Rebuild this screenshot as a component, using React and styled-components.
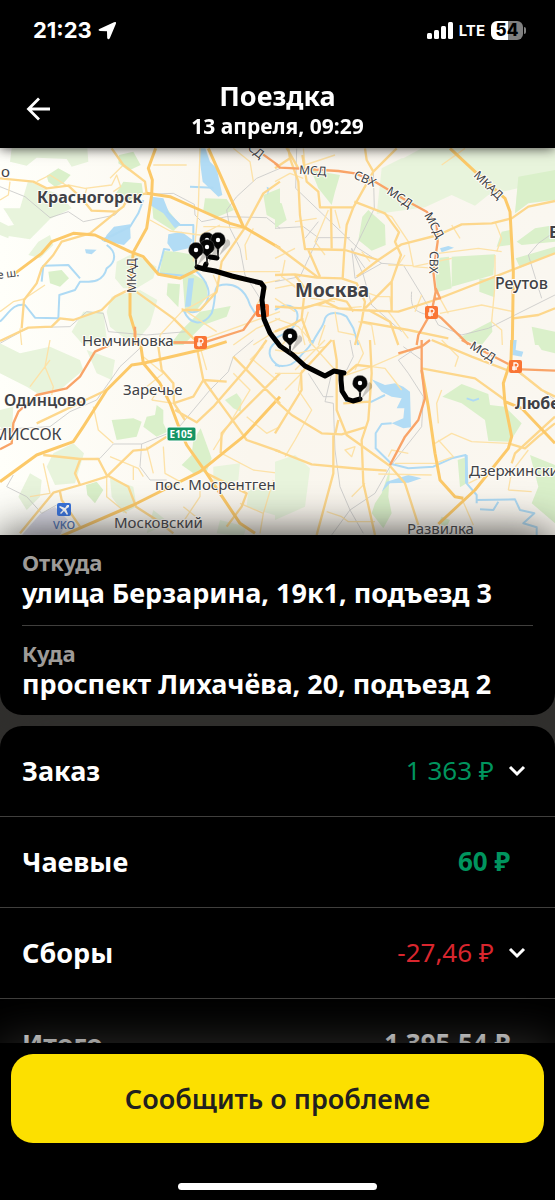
import { useState } from "react";
import styled, { createGlobalStyle } from "styled-components";

const black = "#000000";
const white = "#ffffff";
const panel = "#302f2d";
const muted = "#9e9b98";
const divider = "#403f3d";
const green = "#00945e";
const red = "#d9262e";
const yellow = "#fce000";
const ink = "#21201f";

const GlobalStyle = createGlobalStyle`
    * {
        box-sizing: border-box;
    }
    body {
        margin: 0;
        background-color: ${black};
        font-family: "Noto Sans", "Open Sans", sans-serif;
        color: ${white};
    }
`

const Screen = styled.div`
    height: 100vh;
    display: flex;
    flex-direction: column;
    background-color: ${black};
    overflow: hidden;
`

const StatusBar = styled.div`
    position: relative;
    z-index: 3;
    display: flex;
    align-items: center;
    justify-content: space-between;
    flex-shrink: 0;
    height: 60px;
    padding: 0 29px 0 33px;
    background-color: ${black};
    font-family: Inter, sans-serif;
`
const StatusGroup = styled.div`
    display: flex;
    align-items: center;
    gap: 6px;
`
const Clock = styled.span`
    font-size: 22px;
    font-weight: 700;
`
const Network = styled.span`
    font-size: 15px;
    font-weight: 700;
`
const Battery = styled.div`
    display: flex;
    align-items: center;
    gap: 1px;
`
const BatteryBody = styled.span`
    width: 32px;
    height: 19px;
    border-radius: 6px;
    background: linear-gradient(90deg, ${white} 54%, #808080 54%);
    color: ${black};
    font-size: 17px;
    line-height: 19px;
    font-weight: 800;
    text-align: center;
`
const BatteryCap = styled.span`
    width: 2px;
    height: 7px;
    border-radius: 0 2px 2px 0;
    background-color: #808080;
`

const Header = styled.header`
    display: grid;
    grid-template-columns: 54px 1fr 54px;
    align-items: center;
    flex-shrink: 0;
    height: 88px;
    padding: 11px 0 0;
    position: relative;
    z-index: 2;
    background-color: ${black};
    box-shadow: 0 0 12px ${panel};
`
const BackButton = styled.button`
    display: flex;
    justify-content: flex-end;
    padding: 0 4px 2px 0;
    border: none;
    background: none;
    color: ${white};
    cursor: pointer;
`
const Heading = styled.div`
    text-align: center;
`
const Title = styled.h1`
    margin: 0;
    font-size: 27px;
    line-height: 32px;
    font-weight: 700;
`
const Subtitle = styled.p`
    margin: 0;
    font-size: 21px;
    line-height: 28px;
    font-weight: 700;
`

const Content = styled.main`
    flex: 1;
    min-height: 0;
    overflow-y: auto;
    scrollbar-width: none;
    background-color: ${panel};
`
const MapSvg = styled.svg`
    display: block;
    width: 100%;
    height: auto;
    font-family: "Noto Sans", sans-serif;
`

const Addresses = styled.section`
    position: relative;
    padding: 13px 22px 15px;
    margin-bottom: 11px;
    border-radius: 0 0 22px 22px;
    background-color: ${black};
    box-shadow: 0 0 45px ${panel};
`
const Address = styled.div`
    padding-bottom: 16px;

    & + & {
        padding-top: 13px;
        padding-bottom: 0;
        border-top: 1px solid ${divider};
    }
`
const AddressLabel = styled.div`
    padding-bottom: 1px;
    font-size: 22px;
    line-height: 28px;
    font-weight: 700;
    color: ${muted};
`
const AddressText = styled.div`
    font-size: 27px;
    line-height: 32px;
    font-weight: 700;
`

const Summary = styled.section`
    position: relative;
    border-radius: 22px 22px 0 0;
    background-color: ${black};
`
const Row = styled.div`
    display: flex;
    align-items: center;
    justify-content: space-between;
    height: 91px;
    padding: 0 ${props => props.$plain ? "45px" : "22px"} 2px 22px;
    border-bottom: 1px solid ${divider};
    font-size: 27px;
    font-weight: 700;
`
const Toggle = styled.button`
    display: flex;
    align-items: center;
    gap: 7px;
    padding: 0;
    border: none;
    background: none;
    color: ${white};
    font: inherit;
    cursor: pointer;
`
const Amount = styled.span`
    color: ${props => props.$color};
    font-size: 26px;
    font-weight: ${props => props.$light ? 400 : 700};
`

const Footer = styled.footer`
    position: relative;
    z-index: 2;
    display: flex;
    flex-direction: column;
    align-items: center;
    flex-shrink: 0;
    padding: 11px 11px 10px;
    gap: 40px;
    background-color: ${black};
    box-shadow: 0 0 45px ${panel};
`
const ReportButton = styled.button`
    width: 100%;
    height: 89px;
    border: none;
    border-radius: 22px;
    background-color: ${yellow};
    color: ${ink};
    font-family: inherit;
    font-size: 27px;
    font-weight: 600;
    cursor: pointer;
`
const HomeIndicator = styled.div`
    width: 36vw;
    height: 7px;
    border-radius: 4px;
    background-color: ${white};
`

// every tile is drawn at 3x, [x, y] is its corner on the map
const tiles = [
    {
        x: 0, y: -3,
        pale: [
            "M10 190L60 190L85 105L130 130L180 150L215 190L150 222L90 283L20 272L10 245L42 240L20 205Z",
            "M35 10L262 10L265 50L215 65L200 42L110 38L80 62L30 50Z",
            "M115 290L150 270L160 300L120 340L85 330ZM250 500L310 500L320 580L250 600L215 560Z",
            "M400 325L470 365L460 400L410 430L370 430L345 400L350 350Z",
            "M335 455L420 435L472 465L450 540L400 600L330 545L320 500Z",
            "M0 230L30 245L25 280L0 270Z",
        ],
        green: [
            "M140 92L175 70L212 90L190 115L165 125L145 110Z",
            "M357 30L400 20L422 60L385 77L355 55Z",
            "M370 110L425 115L430 150L375 170L345 150Z",
            "M615 160L680 162L702 195L650 217L610 195Z",
            "M790 150L840 130L840 232L800 210Z",
            "M492 318L530 320L583 330L585 370L545 395L478 383Z",
            "M575 385L620 410L622 455L590 495L555 495L548 400Z",
            "M455 165L500 190L540 240L520 258L460 220Z",
            "M503 415L540 418L535 487L500 450Z",
            "M600 500L692 483L680 515L610 540L550 600L510 600L540 560Z",
            "M145 380L185 375L207 400L180 425L150 415Z",
        ],
        lake: [
            "M598 10L616 10L630 50L650 70L667 150L655 155L608 110L600 50Z",
            "M505 268L545 260L578 285L565 310L520 320L502 295Z",
            "M342 245L390 238L392 280L372 300L345 295L310 290L320 270Z",
            "M255 313L290 314L275 328L258 325Z",
            "M565 400L582 400L572 485L555 485Z",
            "M455 155L490 160L510 210L540 240L525 250L490 205L450 180Z",
            "M800 125L810 130L803 150Z",
        ],
        river: [
            "M430 165L415 205L390 245L340 270L305 285",
            "M500 200L540 240L580 240L580 320M570 125L640 128",
            "M510 315L492 312L485 340L472 385L555 392L588 372",
            "M585 375C625 410 640 450 610 485C590 510 565 500 552 498C570 540 610 545 635 505C650 460 640 430 655 422C700 410 735 430 750 480L765 505",
            "M320 300C350 320 350 350 320 370C310 410 280 412 240 410L225 435L178 450L175 520L105 518L75 480C40 475 30 500 0 530",
            "M240 400L205 360L130 362L125 410",
        ],
        rail: [
            "M0 125L75 155L150 218L205 200L250 230L345 210L400 150L520 145L583 178L585 210L605 230L680 215L800 218L840 250",
            "M840 70L770 100L710 155L680 195L690 250L720 310L735 390L780 460",
            "M0 595L85 548L210 545L260 500L310 505L325 560L440 570L560 560",
        ],
        minor: [
            "M0 500L40 470L72 462L135 420M30 110L25 150L0 165M110 110L150 90L200 122M205 120L255 130L335 120L350 90L362 125L340 140",
            "M600 10L595 190L580 350M700 10L750 50L760 110M450 225L510 258L600 270L660 240M610 245L660 245L735 250M760 250L735 300L740 345",
            "M640 380L840 380M655 425L640 390M545 490L650 560M480 570L545 500L600 470L650 440M480 600L480 570",
            "M690 400L790 415L840 405M700 600L770 550L840 520M590 590L840 500M760 600L840 550M800 430L770 480",
            "M370 60L330 100M460 60L560 60M60 550L65 600M255 150L260 130",
        ],
        road: [
            "M335 10L370 60L435 110L440 145M0 100L100 110L140 130L205 122L245 160L275 197L350 200L370 185L385 155L440 145",
            "M350 200L270 265L185 290L160 330L125 370L110 415L72 465L65 550M0 588L85 548L155 545L180 520L220 525L305 495L345 455L395 430L520 520L590 590",
            "M840 110L790 145L735 248L665 350L650 440L600 495L545 495",
        ],
        major: [
            "M467 10L445 70L457 105L455 150L440 250L400 322L395 370L390 430L390 510L405 560L405 600",
            "M45 385L125 325L155 290L220 265L285 270L390 320L430 335L475 388L540 400L600 370",
            "M625 10L730 245M440 145L510 155L600 195L690 235L735 248L840 310",
        ],
        toll: ["M785 25L840 65", "M515 592L585 592M620 590L730 555L770 500", "M405 545L405 600"],
    },
    {
        x: 275, y: -3,
        pale: [
            "M385 40L440 10L840 10L840 145L760 175L720 205L728 130L640 150L600 182L530 150L450 187L305 207L320 70L380 40Z",
        ],
        green: [
            "M730 95L840 75L840 165L760 175L720 205Z",
            "M280 195L330 240L332 300L290 317L250 285L262 215Z",
            "M108 75L195 90L180 140L170 180L130 130Z",
            "M480 340L522 335L530 430L485 442ZM530 335L660 328L655 390L530 425Z",
            "M613 402L660 398L658 457L613 440ZM680 260L705 255L705 300L665 305Z",
            "M725 290L780 250L840 240L840 290L740 300ZM722 340L840 305L840 325L735 368Z",
            "M550 580L650 528L652 560L620 600Z",
            "M0 170L20 175L35 225L0 250ZM770 545L840 560L840 600L780 600Z",
        ],
        lake: ["M495 310L520 303L537 308L520 315L500 322Z"],
        river: [
            "M0 495C25 478 50 475 65 500C75 525 55 550 40 560L0 580",
            "M110 600C125 560 145 550 150 520C160 500 190 500 215 515L235 550L250 600",
            "M715 590L720 600",
        ],
        rail: [
            "M65 10L62 130L250 310L320 355L385 360L440 450L490 540L560 570L640 550L840 450M295 80L298 190L235 320L270 370",
            "M0 250L85 245L130 278L225 278M130 278L75 395L0 410M320 355L240 400L230 310L265 390L290 480L380 560",
            "M410 440C405 490 420 500 460 510M840 260L790 295L760 330L800 460M90 280L130 230",
        ],
        minor: [
            "M0 110L45 85L85 100M85 10L90 60L180 30M60 230L125 220M0 430L50 420L110 460L180 470M0 520L70 545L110 590",
            "M325 205L350 215L400 290L415 365L530 340M340 360L415 362M415 365L480 370M440 450L420 500M340 500L400 580",
            "M490 325L610 310L680 320M660 330L660 420L650 530L680 555L682 600M495 505L620 480L715 500M520 505L495 460",
            "M660 230L680 280L665 320M530 240L555 280M160 195L120 290L150 330M180 195L195 250M0 340L60 310M30 345L20 395L70 430",
            "M240 430L310 455L345 455L350 500M60 490L120 480L200 490L260 485M100 500L80 560L90 600M180 500L190 560L240 570M250 530L290 540L300 600M0 460L60 500M150 540L130 600",
            "M285 350L260 320M370 360L390 330M570 10L500 60M20 600L60 560",
        ],
        road: [
            "M45 40L70 110L75 210L90 312L210 315L310 345L380 298L490 270L560 238L650 235L710 220L760 185L840 168",
            "M82 30L95 110L130 140L135 187L235 187L295 80L275 45L270 10M295 80L365 10M235 187L215 240L208 315L203 400",
            "M238 170L330 205L372 262L360 290L378 330L350 410L300 460L270 490M0 300L60 345L130 398M168 190L170 310M100 315L135 395",
            "M0 70L45 40L40 10M30 0L70 70M0 390L60 388L125 398L200 400L245 415L270 470L260 530L240 600M310 345L245 395",
            "M60 390L90 430L80 520L110 600M0 485L85 490L150 470L190 490L240 495L370 500L480 465L840 325",
            "M350 410L350 500M260 530L400 555L520 580M280 495L345 530L370 600M0 560L50 540L85 520M130 480L175 460L215 470L235 500",
            "M715 520L790 510L840 490",
        ],
        major: ["M525 10L600 80L690 160L705 200L715 380L712 600"],
        toll: [
            "M0 55L15 68L60 70L190 78L240 85L300 110L400 170L455 200L485 240L488 290L475 380L482 440L470 500L430 570L425 600",
            "M470 500L500 520L580 598M482 430L495 460L475 462",
        ],
    },
    {
        x: 0, y: 192,
        pale: [
            "M0 10L60 40L150 20L240 60L250 90L180 150L120 165L80 140L0 100Z",
            "M90 400L125 420L120 470L80 510L55 470Z",
            "M160 340L220 310L252 340L225 430L165 435L140 380Z",
            "M330 415L400 440L410 500L370 520L335 470Z",
            "M0 210L40 200L35 290L0 260ZM640 380L720 370L715 420L640 440Z",
            "M745 450L840 420L840 530L790 515L740 500ZM660 540L740 560L730 590L650 580ZM460 510L510 550L440 580Z",
            "M260 30L345 60L335 120L290 100Z",
        ],
        green: [
            "M335 240L400 235L425 245L410 290L350 300Z",
            "M440 230L465 225L470 195L490 210L490 250L502 275L470 290L430 260Z",
            "M602 265L635 355L620 395L580 400L545 375L575 345L580 300Z",
            "M258 435L290 425L310 450L285 490L262 465Z",
            "M675 180L710 160L725 180L722 215L700 205Z",
        ],
        lake: [],
        river: ["M830 5C800 25 800 55 840 80"],
        rail: [
            "M760 0L700 50L685 95L630 150L580 210L530 270L425 312L340 312L300 355L240 357L130 345",
            "M425 312L420 380L450 420L500 420M425 20L360 80L290 180L210 215L150 260L0 268M40 405L20 440L80 470L125 520L170 495",
        ],
        minor: [
            "M150 0L135 80L160 140L155 165M90 140L150 60M280 200L295 270L340 310M330 350L415 385L430 410M490 320L495 400L540 425",
            "M130 370L150 460L90 470M320 410L320 470L380 520M440 320L460 400M600 420L600 470L540 560M720 490L790 520L780 580",
            "M430 50L490 100L440 140M455 180L520 190M480 140L455 180M700 100L750 150L640 330M740 230L800 280L840 260M665 340L760 390L840 400",
            "M760 60L830 120M790 20L750 60M620 90L600 20M400 420L400 380M550 500L600 540M820 420L790 520",
        ],
        road: [
            "M60 580L105 525L160 458L240 435L320 410L400 332L440 328L500 290M130 345L240 357L295 357L320 405L385 440L408 500L470 540L520 580",
            "M592 30L610 120L690 230L740 300L840 335M525 210L590 247L640 200L740 85L800 0M520 190L580 170L610 120L680 125",
            "M475 20L485 90L520 130L522 190L555 240M240 360L225 400L240 435M662 340L665 280L700 240L840 100M700 50L840 190",
            "M180 455L185 480L240 560M620 400L740 460L725 500L680 560M110 250L320 150",
        ],
        major: [
            "M0 425L110 345L220 305L250 260L320 150L395 75L430 70L600 30L680 5",
            "M420 0L430 70L480 130L510 190L540 270L560 315L620 400L720 550L765 580",
            "M180 590L400 495L600 395L730 290L840 170",
        ],
        toll: ["M330 15L285 35L240 110L200 145L110 165L55 215L40 250L35 310L0 328", "M515 8L585 8"],
    },
    {
        x: 275, y: 192,
        pale: ["M0 365L60 345L105 385L90 500L0 540Z"],
        green: [
            "M502 170L560 132L640 162L645 195L690 200L740 250L705 305L640 303L630 240L560 190Z",
            "M765 345L840 375L840 550L770 490L790 440Z",
            "M345 385L340 470L350 520L325 565L290 520L300 490L320 460Z",
            "M548 360L578 350L575 430L555 442Z",
            "M780 0L840 0L840 40L800 30ZM500 530L525 540L515 560L490 550Z",
        ],
        lake: [
            "M290 118L330 135L360 130L385 140L405 155L408 262L385 265L350 250L385 235L388 205L365 205L380 175L350 170L320 155Z",
            "M715 0L725 0L722 30L745 35L740 50L712 45Z",
            "M320 455L335 425L400 405L440 415L400 428L345 430Z",
            "M570 345L578 345L580 430L570 430Z",
        ],
        river: [
            "M210 185L290 185L330 165M350 250L320 252L302 280L302 325L350 372L400 385L475 380L530 355L572 345L575 430L605 465L605 490M605 480L720 478L735 510L778 520L745 550L785 562L785 585M615 508L655 510L670 485M575 175L595 182L612 176",
            "M0 75C40 85 60 70 75 50C90 30 110 20 112 0",
        ],
        rail: [
            "M225 0L235 50L215 90L170 100L150 185L175 190L180 330L195 440L225 510L170 585M225 510L300 460L345 380L440 260L445 170L400 100L370 60L430 20",
            "M100 100L145 170L175 170M225 510L265 580M720 90L840 180M385 20L440 60",
        ],
        minor: [
            "M0 100L80 100L30 150M80 90L70 150L110 210L60 300L30 350M250 0L265 40L240 90M290 80L330 85L380 150",
            "M360 370L480 370L535 350L490 300M480 310L530 280L590 305L700 310M490 250L485 190L500 150M340 350L350 330L400 340M470 405L310 402",
            "M155 515L200 530L220 545L300 545M210 330L240 320L230 350ZM150 0L60 90M0 30L70 40L150 20M100 0L180 90M200 110L290 80L440 15M500 0L550 50L540 80",
            "M700 450L710 395L760 330M700 450L770 455M270 430L230 470M560 475L595 555M580 430L640 400",
        ],
        road: [
            "M0 280L80 150L78 100L170 0M0 330L110 373L260 387L335 392M175 0L185 60L185 210L215 285L345 378L390 430L430 555",
            "M0 180L50 225L140 280L200 283L270 262M175 280L175 400L125 585M285 0L290 100L280 240L260 300L265 430L300 585M205 190L285 185",
            "M440 85L600 115L690 180M700 310L750 325L790 290L840 250M710 370L720 340L840 230M190 240L180 285M470 0L590 50L700 92",
            "M725 90L800 150L840 170M215 100L245 75L290 80",
        ],
        major: [
            "M440 90L460 200L480 340L495 420L540 470L565 475",
            "M710 0L708 60L685 130L690 190L710 290L700 325L600 450L490 552M690 185L740 205L840 310",
        ],
        toll: ["M465 0L440 20L370 40M440 0L440 90L450 175L430 240L390 290L345 375", "M560 0L700 72M740 88L840 92"],
    },
];

const labels = [
    { text: "о", x: 1, y: 29, size: 15 },
    { text: "Красногорск", x: 37, y: 55, size: 16, weight: 700 },
    { text: "е ш.", x: -2, y: 131, size: 11, rotate: -8 },
    { text: "МКАД", x: 136, y: 145, size: 12, rotate: -90 },
    { text: "Немчиновка", x: 82, y: 198, size: 15 },
    { text: "Одинцово", x: 4, y: 258, size: 16, weight: 600 },
    { text: "Заречье", x: 123, y: 247, size: 15 },
    { text: "МИССОК", x: -7, y: 292, size: 16 },
    { text: "пос. Мосрентген", x: 155, y: 342, size: 15 },
    { text: "Московский", x: 114, y: 380, size: 15 },
    { text: "Москва", x: 295, y: 149, size: 19, weight: 700 },
    { text: "Реутов", x: 495, y: 141, size: 16, weight: 500 },
    { text: "Б", x: 549, y: 90, size: 16, weight: 700 },
    { text: "Любе", x: 515, y: 261, size: 16, weight: 700 },
    { text: "Дзержински", x: 469, y: 328, size: 15 },
    { text: "Развилка", x: 407, y: 386, size: 15 },
    { text: "СД", x: 247, y: 1, size: 12, rotate: 38 },
    { text: "МСД", x: 299, y: 26, size: 12, rotate: 3 },
    { text: "СВХ", x: 353, y: 30, size: 12, rotate: 24 },
    { text: "МСД", x: 386, y: 45, size: 12, rotate: 34 },
    { text: "МСД", x: 424, y: 67, size: 12, rotate: 62 },
    { text: "СВХ", x: 430, y: 103, size: 12, rotate: 92 },
    { text: "МКАД", x: 473, y: 28, size: 12, rotate: 44 },
    { text: "МСД", x: 469, y: 200, size: 12, rotate: 32 },
];

const pins = [[207, 92], [218, 92], [207, 99], [196, 102], [290, 188], [360, 235]];
const tolls = [[262, 162], [200, 194], [431, 164], [515, 218]];

const Tile = ({ tile }) => (
    <g transform={`translate(${tile.x} ${tile.y}) scale(0.33333)`}>
        <path d={tile.pale.join("")} fill="#e8f4dc" />
        <path d={tile.green.join("")} fill="#daf0ca" />
        <path d={tile.lake.join("")} fill="#b2dcf5" />
        <g fill="none" strokeLinejoin="round">
            <path d={tile.river.join("")} stroke="#aedaf4" strokeWidth="6" />
            <path d={tile.rail.join("")} stroke="#c9c9c8" strokeWidth="2.5" />
            <path d={tile.minor.join("")} stroke="#fde2a8" strokeWidth="4" />
            <path d={tile.road.join("")} stroke="#fdd78c" strokeWidth="7" />
            <path d={tile.major.join("")} stroke="#fcc969" strokeWidth="9" />
            <path d={tile.toll.join("")} stroke="#f9a468" strokeWidth="7" />
        </g>
    </g>
)

const Pin = ({ x, y }) => (
    <g transform={`translate(${x} ${y})`}>
        <path d="M1 16L6 5L9 -1Q13 0 12 5Z" fill="#000" opacity="0.2" />
        <path d="M-1 5L0 17L1 5Z" fill="#222" stroke="#222" strokeWidth="1" />
        <path d="M0 -7.5A7.3 7.3 0 0 1 3.5 6.2L0 10L-3.5 6.2A7.3 7.3 0 0 1 0 -7.5Z" fill="#050505" stroke="#777" strokeWidth="0.4" />
        <circle r="2.2" fill="#fff" />
    </g>
)

const RouteMap = () => (
    <MapSvg viewBox="0 0 555 387" role="img" aria-label="Карта поездки">
        <defs>
            <linearGradient id="land">
                <stop offset="0" stopColor="#fffffa" />
                <stop offset="0.45" stopColor="#faf6ee" />
                <stop offset="1" stopColor="#faf7f0" />
            </linearGradient>
        </defs>
        <rect width="555" height="387" fill="url(#land)" />
        <path d="M22 387L40 366L55 359L68 372L60 387Z" fill="#dcdce8" />
        {tiles.map((tile, i) => <Tile key={i} tile={tile} />)}

        {tolls.map(([x, y]) => (
            <g key={x} transform={`translate(${x} ${y})`}>
                <rect x="-6" y="-6" width="13" height="13" rx="2" fill="#f97535" />
                <path d="M-1 4.5V-3H1.5A2.2 2.2 0 0 1 1.5 1.2H-3M-3 3H2" fill="none" stroke="#fff" strokeWidth="1.3" />
            </g>
        ))}

        <path
            d="M197 119L204 121L206 116M210 109L217 110M204 121L215 123L232 128L261 135L264 139L262 152L264 171L270 185L280 198L293 207L305 218L325 228L334 223L344 225M341 225L341 232L342 243L347 251L353 253L360 251"
            fill="none"
            stroke="#000"
            strokeWidth="5"
            strokeLinecap="round"
            strokeLinejoin="round"
        />

        <rect x="167" y="279" width="29" height="14" rx="2" fill="#159464" stroke="#fff" strokeWidth="1" />
        <text x="181" y="290" textAnchor="middle" fontSize="10" fontWeight="700" fill="#fff">E105</text>
        <rect x="57" y="355" width="14" height="13" rx="2" fill="#3874e0" />
        <path d="M60 365L63 362L59 359L60 358L65 360L67 357L69 357L69 359L66 361L68 366L67 367L64 363L61 366Z" fill="#fff" />
        <text x="64" y="381" textAnchor="middle" fontSize="11" fontWeight="500" fill="#476fb6">VKO</text>

        {labels.map((label, i) => (
            <text
                key={i}
                transform={`translate(${label.x} ${label.y}) rotate(${label.rotate || 0})`}
                fontSize={label.size}
                fontWeight={label.weight || 400}
                fill="#404146"
                stroke="#fffdf8"
                strokeWidth="2"
                strokeLinejoin="round"
                paintOrder="stroke"
            >
                {label.text}
            </text>
        ))}

        {pins.map(([x, y], i) => <Pin key={i} x={x} y={y} />)}
    </MapSvg>
)

const Chevron = ({ open }) => (
    <svg width="32" height="32" viewBox="0 0 32 32" transform={open ? "rotate(180)" : undefined}>
        <path d="M9 13L16 20L23 13" fill="none" stroke="currentColor" strokeWidth="3" />
    </svg>
)

const App = () => {
    const [opened, setOpened] = useState({});

    const toggle = (name) => setOpened(prev => ({ ...prev, [name]: !prev[name] }));

    return (
        <Screen>
            <GlobalStyle />
            <StatusBar>
                <StatusGroup>
                    <Clock>21:23</Clock>
                    <svg width="19" height="19" viewBox="0 0 19 19">
                        <path d="M1.4 8L16 1.2Q18.8 .2 17.8 3L11.8 17.2Q10.2 19.6 9.2 17L9 10.2L2 10Q-.6 9.4 1.4 8Z" fill="#fff" />
                    </svg>
                </StatusGroup>
                <StatusGroup>
                    <svg width="26" height="17" viewBox="0 0 26 17" fill="#fff">
                        <rect x="0" y="11" width="5" height="6" rx="1.5" />
                        <rect x="7" y="8" width="5" height="9" rx="1.5" />
                        <rect x="14" y="4" width="5" height="13" rx="1.5" />
                        <rect x="21" y="0" width="5" height="17" rx="1.5" />
                    </svg>
                    <Network>LTE</Network>
                    <Battery>
                        <BatteryBody>54</BatteryBody>
                        <BatteryCap />
                    </Battery>
                </StatusGroup>
            </StatusBar>

            <Header>
                <BackButton aria-label="Назад">
                    <svg width="24" height="24" viewBox="0 0 24 24" fill="none" stroke="currentColor" strokeWidth="2.8">
                        <path d="M24 12H3M13 1.5L2.5 12L13 22.5" />
                    </svg>
                </BackButton>
                <Heading>
                    <Title>Поездка</Title>
                    <Subtitle>13 апреля, 09:29</Subtitle>
                </Heading>
            </Header>

            <Content>
                <RouteMap />
                <Addresses>
                    <Address>
                        <AddressLabel>Откуда</AddressLabel>
                        <AddressText>улица Берзарина, 19к1, подъезд 3</AddressText>
                    </Address>
                    <Address>
                        <AddressLabel>Куда</AddressLabel>
                        <AddressText>проспект Лихачёва, 20, подъезд 2</AddressText>
                    </Address>
                </Addresses>
                <Summary>
                    <Row>
                        <span>Заказ</span>
                        <Toggle aria-expanded={!!opened.order} onClick={() => toggle("order")}>
                            <Amount $color={green} $light>1 363 ₽</Amount>
                            <Chevron open={opened.order} />
                        </Toggle>
                    </Row>
                    <Row $plain>
                        <span>Чаевые</span>
                        <Amount $color={green}>60 ₽</Amount>
                    </Row>
                    <Row>
                        <span>Сборы</span>
                        <Toggle aria-expanded={!!opened.fees} onClick={() => toggle("fees")}>
                            <Amount $color={red} $light>-27,46 ₽</Amount>
                            <Chevron open={opened.fees} />
                        </Toggle>
                    </Row>
                    <Row $plain>
                        <span>Итого</span>
                        <Amount $color={white}>1 395,54 ₽</Amount>
                    </Row>
                </Summary>
            </Content>

            <Footer>
                <ReportButton>Сообщить о проблеме</ReportButton>
                <HomeIndicator />
            </Footer>
        </Screen>
    )
};

export default App;
